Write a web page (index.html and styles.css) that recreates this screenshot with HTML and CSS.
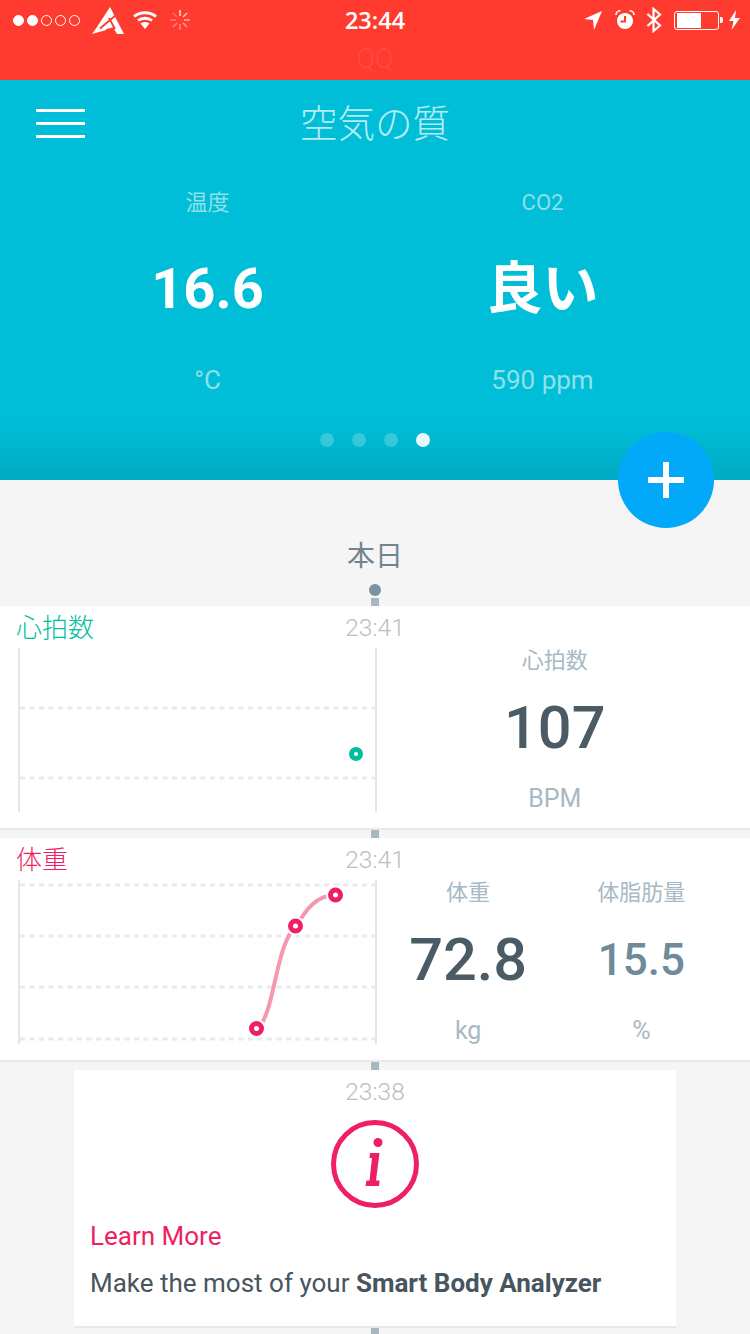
FILE: index.html
```html
<!DOCTYPE html>
<html lang="ja">
<head>
    <meta charset="UTF-8">
    <meta name="viewport" content="width=device-width, initial-scale=1.0">
    <title>空気の質</title>
    <link rel="stylesheet" href="styles.css">
</head>
<body>

    <div class="topbar">
        <div class="status">
            <div class="status-left">
                <span class="signal"><i class="on"></i><i class="on"></i><i></i><i></i><i></i></span>
                <svg class="carrier" width="32" height="27" viewBox="0 0 32 27">
                    <path d="M18 0 L32 27 H25 L21.500 21 L0 27 L5 20 Z" fill="#fff"/>
                    <path d="M24 8 L8 21.500 M17 11 L23 22 M21.500 21 L14 23" fill="none" stroke="#ff3b30" stroke-width="1.800"/>
                </svg>
                <svg class="wifi" width="24" height="18" viewBox="0 0 24 18">
                    <path d="M1 5.500 C7.500 0.500 16.500 0.500 23 5.500" fill="none" stroke="#fff" stroke-width="2.800"/>
                    <path d="M5 9.500 C9 6.500 15 6.500 19 9.500" fill="none" stroke="#fff" stroke-width="2.800"/>
                    <path d="M7.500 12.500 C10 10.500 14 10.500 16.500 12.500 L12 18 Z" fill="#fff"/>
                </svg>
                <svg class="spinner" width="20" height="20" viewBox="0 0 20 20">
                    <g stroke="#fff" stroke-width="1.600">
                        <path d="M10 0 V6"/>
                        <path d="M17 3 L13 7" opacity=".85"/>
                        <path d="M20 10 H14" opacity=".7"/>
                        <path d="M17 17 L13 13" opacity=".6"/>
                        <path d="M10 20 V14" opacity=".5"/>
                        <path d="M3 17 L7 13" opacity=".45"/>
                        <path d="M0 10 H6" opacity=".4"/>
                        <path d="M3 3 L7 7" opacity=".35"/>
                    </g>
                </svg>
            </div>
            <div class="clock">23:44</div>
            <div class="status-right">
                <svg class="arrow" width="18" height="19" viewBox="0 0 18 19">
                    <path d="M0 8 L18 0 L10 19 L9 9 Z" fill="#fff"/>
                </svg>
                <svg class="alarm" width="20" height="20" viewBox="0 0 20 20">
                    <circle cx="10" cy="11" r="8" fill="#fff"/>
                    <path d="M10 6 V11.500 H5.500" fill="none" stroke="#ff3b30" stroke-width="2"/>
                    <path d="M1 5 C1 2 3 0.800 5.500 0.800 M19 5 C19 2 17 0.800 14.500 0.800" fill="none" stroke="#fff" stroke-width="1.600"/>
                </svg>
                <svg class="bluetooth" width="16" height="26" viewBox="0 0 16 26">
                    <path d="M1.500 7 L14 18.500 L7.500 24 V2 L14 7.500 L1.500 19" fill="none" stroke="#fff" stroke-width="2.200"/>
                </svg>
                <span class="battery"><span class="battery-fill"></span></span>
                <span class="battery-tip"></span>
                <svg class="bolt" width="11" height="20" viewBox="0 0 11 20">
                    <path d="M7 0 L0 11 H4.500 L2.500 20 L11 8 H6 Z" fill="#fff"/>
                </svg>
            </div>
        </div>
        <div class="carrier-name">QQ</div>
    </div>

    <header class="hero">
        <div class="hero-nav">
            <div class="menu"><span></span><span></span><span></span></div>
            <h1>空気の質</h1>
        </div>
        <div class="stats">
            <div class="stat">
                <div class="stat-label">温度</div>
                <div class="stat-value">16.6</div>
                <div class="stat-unit">°C</div>
            </div>
            <div class="stat">
                <div class="stat-label">CO2</div>
                <div class="stat-value">良い</div>
                <div class="stat-unit">590 ppm</div>
            </div>
        </div>
        <div class="dots"><i></i><i></i><i></i><i class="active"></i></div>
        <div class="fab"><span></span></div>
    </header>

    <main class="timeline">
        <div class="today">本日</div>
        <div class="today-dot"></div>
        <div class="link"></div>

        <!-- heart rate -->
        <section class="card">
            <div class="card-head">
                <span class="card-title green">心拍数</span>
                <span class="time">23:41</span>
            </div>
            <div class="card-body">
                <svg class="chart" width="360" height="164" viewBox="0 0 360 164">
                    <path class="axis" d="M1 0 V164 M358 0 V164"/>
                    <path class="grid" d="M2 60 H357 M2 130 H357"/>
                    <circle cx="338" cy="106" r="4.500" fill="#fff" stroke="#00bf9f" stroke-width="5"/>
                </svg>
                <div class="values">
                    <div class="value">
                        <div class="value-label">心拍数</div>
                        <div class="value-num">107</div>
                        <div class="value-unit">BPM</div>
                    </div>
                </div>
            </div>
        </section>
        <div class="link"></div>

        <!-- weight -->
        <section class="card">
            <div class="card-head">
                <span class="card-title pink">体重</span>
                <span class="time">23:41</span>
            </div>
            <div class="card-body">
                <svg class="chart" width="360" height="164" viewBox="0 0 360 164">
                    <path class="axis" d="M1 0 V164 M358 0 V164"/>
                    <path class="grid" d="M2 5 H357 M2 56 H357 M2 107 H357 M2 159 H357"/>
                    <path d="M239 149 C257 135 257 65 278 46 C288 30 298 15 318 15" fill="none" stroke="#f798b0" stroke-width="4"/>
                    <circle cx="238.500" cy="148.500" r="9.500" fill="#fff"/>
                    <circle cx="277.500" cy="46" r="9.500" fill="#fff"/>
                    <circle cx="317.500" cy="15" r="9.500" fill="#fff"/>
                    <circle cx="238.500" cy="148.500" r="5" fill="#fff" stroke="#ee1f62" stroke-width="5"/>
                    <circle cx="277.500" cy="46" r="5" fill="#fff" stroke="#ee1f62" stroke-width="5"/>
                    <circle cx="317.500" cy="15" r="5" fill="#fff" stroke="#ee1f62" stroke-width="5"/>
                </svg>
                <div class="values">
                    <div class="value">
                        <div class="value-label">体重</div>
                        <div class="value-num">72.8</div>
                        <div class="value-unit">kg</div>
                    </div>
                    <div class="value">
                        <div class="value-label">体脂肪量</div>
                        <div class="value-num small">15.5</div>
                        <div class="value-unit">%</div>
                    </div>
                </div>
            </div>
        </section>
        <div class="link"></div>

        <!-- info card -->
        <section class="card info">
            <div class="time">23:38</div>
            <svg class="info-icon" width="88" height="88" viewBox="0 0 88 88">
                <circle cx="44" cy="44" r="41.500" fill="none" stroke="#ee1f62" stroke-width="5"/>
                <circle cx="47" cy="22.500" r="4.500" fill="#ee1f62"/>
                <path d="M39 33 H48.500 L45 60.500 H48.500 L48 66 H34.500 L35.500 60.500 H38.500 L41 38 H38.500 Z" fill="#ee1f62"/>
            </svg>
            <div class="info-title">Learn More</div>
            <p class="info-text">Make the most of your <b>Smart Body Analyzer</b></p>
        </section>
        <div class="link"></div>
    </main>

</body>
</html>
```

FILE: styles.css
```css
* {
    box-sizing: border-box;
}

html, body {
    margin: 0;
    height: 1334px;
    overflow: hidden;
}

body {
    font-family: Roboto, "Noto Sans CJK JP", sans-serif;
    background-color: #f5f5f5;
}

/* Red status area */
.topbar {
    height: 80px;
    background-color: #ff3b30;
    color: #fff;
}

.status {
    height: 40px;
    display: grid;
    grid-template-columns: 1fr auto 1fr;
    align-items: center;
    padding: 0 13px;
}

.status-left,
.status-right {
    display: flex;
    align-items: center;
}

.status-right {
    justify-content: flex-end;
    margin-right: -3px;
}

.signal {
    display: flex;
    gap: 3px;
}

.signal i {
    width: 11px;
    height: 11px;
    border: 1px solid #fff;
    border-radius: 50%;
}

.signal i.on {
    background-color: #fff;
}

.carrier {
    margin-left: 12px;
}

.wifi {
    margin-left: 9px;
}

.spinner {
    margin-left: 13px;
    opacity: .8;
}

.clock {
    font-size: 23.500px;
    font-weight: 600;
    font-family: "Open Sans", sans-serif;
}

.alarm {
    margin-left: 13px;
}

.bluetooth {
    margin-left: 11px;
}

.battery {
    width: 45px;
    height: 19px;
    margin-left: 12px;
    padding: 1px;
    border: 1px solid #fff;
    border-radius: 3px;
}

.battery-fill {
    display: block;
    width: 24px;
    height: 100%;
    margin-left: 1px;
    background-color: #fff;
}

.battery-tip {
    width: 3px;
    height: 6px;
    margin-left: 1px;
    background-color: #fff;
    border-radius: 0 2px 2px 0;
}

.bolt {
    margin-left: 6px;
}

.carrier-name {
    height: 40px;
    text-align: center;
    font-size: 27px;
    font-weight: 300;
    line-height: 38px;
    color: #ff4b41;
}

/* Teal header */
.hero {
    position: relative;
    height: 400px;
    background: linear-gradient(#00bed8 0, #00bed8 340px, #00aac4 400px);
    color: #fff;
}

.hero-nav {
    position: relative;
    height: 86px;
    padding-top: 20px;
}

.hero-nav h1 {
    margin: 0;
    text-align: center;
    font-size: 37.500px;
    line-height: 48px;
    font-weight: 300;
    color: #b5ecf3;
}

.menu {
    position: absolute;
    left: 36px;
    top: 29px;
    width: 49px;
}

.menu span {
    display: block;
    height: 3px;
    margin-bottom: 10px;
    background-color: #fff;
}

.stats {
    display: grid;
    grid-template-columns: 1fr 1fr;
    padding: 0 40px;
    text-align: center;
}

.stat-label {
    margin-top: 21px;
    font-size: 22px;
    line-height: 32px;
    color: #90e0ea;
}

.stat-value {
    margin-top: 35px;
    font-size: 56px;
    line-height: 70px;
    font-weight: 700;
}

.stat-unit {
    margin-top: 39px;
    font-size: 26px;
    line-height: 34px;
    color: #90e0ea;
}

.dots {
    display: flex;
    justify-content: center;
    gap: 18px;
    margin-top: 36px;
}

.dots i {
    width: 14px;
    height: 14px;
    border-radius: 50%;
    background-color: #fff;
    opacity: .22;
}

.dots i.active {
    opacity: .9;
}

.fab {
    position: absolute;
    right: 36px;
    bottom: -48px;
    width: 96px;
    height: 96px;
    border-radius: 50%;
    background-color: #03a9f9;
}

.fab span {
    position: absolute;
    left: 30px;
    top: 30px;
    width: 36px;
    height: 36px;
    background:
        linear-gradient(#fff, #fff) center / 6px 36px no-repeat,
        linear-gradient(#fff, #fff) center / 36px 6px no-repeat;
}

/* Timeline below */
.today {
    padding-top: 59px;
    text-align: center;
    font-size: 28px;
    line-height: 36px;
    color: #72858f;
}

.today-dot {
    width: 12px;
    height: 12px;
    margin: 9px auto 2px;
    border-radius: 50%;
    background-color: #7b929f;
}

.link {
    width: 8px;
    height: 8px;
    margin: 0 auto;
    background-color: #a6b7c1;
}

.card {
    height: 224px;
    background-color: #fff;
    border-bottom: 2px solid #e8e8e8;
}

.card-head {
    display: grid;
    grid-template-columns: 1fr auto 1fr;
    align-items: center;
    height: 42px;
    padding: 2px 16px 0;
}

.card-title {
    font-size: 26px;
    line-height: 40px;
    font-weight: 300;
}

.green {
    color: #00bf9f;
}

.pink {
    color: #ee1f62;
}

.time {
    font-size: 24.500px;
    line-height: 40px;
    font-weight: 300;
    color: #bdbdbd;
    text-align: center;
}

.card-body {
    display: grid;
    grid-template-columns: 360px 350px;
    padding-left: 18px;
}

.axis {
    stroke: #e0e6e9;
    stroke-width: 2;
}

.grid {
    stroke: #e6ebee;
    stroke-width: 3;
    stroke-dasharray: 5 4.500;
}

.values {
    display: flex;
    margin-left: 3.500px;
    padding-top: 1px;
}

.value {
    flex: 1;
    text-align: center;
}

.value-label {
    font-size: 22px;
    line-height: 24px;
    color: #a6b9c4;
}

.value-num {
    margin-top: 20px;
    font-size: 59.500px;
    line-height: 70px;
    font-weight: 500;
    color: #4a5b66;
}

.value-num.small {
    font-size: 44px;
    color: #6f8b9b;
}

.value-unit {
    margin-top: 20px;
    font-size: 25px;
    line-height: 32px;
    color: #a6b9c4;
}

.info {
    width: 602px;
    height: 258px;
    margin: 0 auto;
    padding: 2px 16px 0;
    text-align: center;
}

.info-icon {
    display: block;
    margin: 8px auto 0;
}

.info-title {
    margin-top: 11px;
    text-align: left;
    font-size: 26px;
    line-height: 34px;
    color: #ee1f62;
}

.info-text {
    margin: 12px 0 0;
    text-align: left;
    font-size: 26px;
    line-height: 36px;
    color: #47555f;
}

.info-text b {
    font-weight: 700;
}
```
